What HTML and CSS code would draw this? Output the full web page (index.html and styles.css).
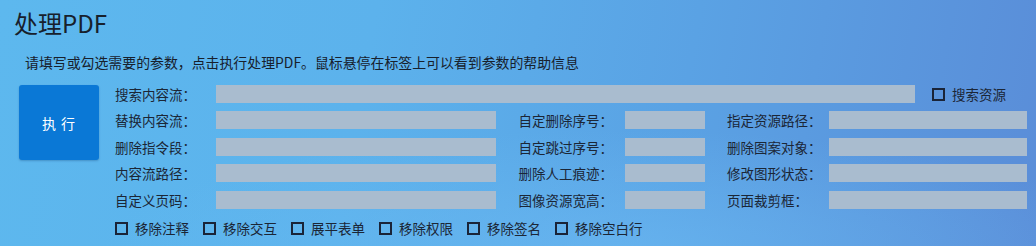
FILE: index.html
```html
<!DOCTYPE html>
<html lang="zh-CN">
<head>
    <meta charset="UTF-8">
    <title>处理PDF</title>
    <link rel="stylesheet" href="styles.css">
</head>
<body>
    <div class="page">
        <h1 class="title">处理PDF</h1>
        <p class="hint">请填写或勾选需要的参数，点击执行处理PDF。鼠标悬停在标签上可以看到参数的帮助信息</p>
        <div class="main">
            <button class="run">执 行</button>
            <div class="form">
                <div class="row-first">
                    <label class="lbl">搜索内容流：</label>
                    <input class="field wide" type="text">
                    <label class="check"><span class="box"></span>搜索资源</label>
                </div>
                <div class="grid">
                    <label class="lbl">替换内容流：</label>
                    <input class="field" type="text">
                    <label class="lbl mid">自定删除序号：</label>
                    <input class="field" type="text">
                    <label class="lbl right">指定资源路径：</label>
                    <input class="field" type="text">

                    <label class="lbl">删除指令段：</label>
                    <input class="field" type="text">
                    <label class="lbl mid">自定跳过序号：</label>
                    <input class="field" type="text">
                    <label class="lbl right">删除图案对象：</label>
                    <input class="field" type="text">

                    <label class="lbl">内容流路径：</label>
                    <input class="field" type="text">
                    <label class="lbl mid">删除人工痕迹：</label>
                    <input class="field" type="text">
                    <label class="lbl right">修改图形状态：</label>
                    <input class="field" type="text">

                    <label class="lbl">自定义页码：</label>
                    <input class="field" type="text">
                    <label class="lbl mid">图像资源宽高：</label>
                    <input class="field" type="text">
                    <label class="lbl right">页面裁剪框：</label>
                    <input class="field" type="text">
                </div>
                <div class="checks">
                    <label class="check"><span class="box"></span>移除注释</label>
                    <label class="check"><span class="box"></span>移除交互</label>
                    <label class="check"><span class="box"></span>展平表单</label>
                    <label class="check"><span class="box"></span>移除权限</label>
                    <label class="check"><span class="box"></span>移除签名</label>
                    <label class="check"><span class="box"></span>移除空白行</label>
                </div>
            </div>
        </div>
    </div>
</body>
</html>
```
FILE: styles.css
```css
html, body {
    margin: 0;
    padding: 0;
    height: 100%;
}
body {
    font-family: "Noto Sans CJK SC", "Noto Sans", sans-serif;
    color: #1b2636;
    background:
        radial-gradient(ellipse 520px 120px at 620px 250px, rgba(110, 190, 245, 0.55), rgba(110, 190, 245, 0) 100%),
        linear-gradient(100deg, #5db8ee 0%, #5cb2ec 35%, #5aa2e4 65%, #5a8dd8 100%);
    overflow: hidden;
}
.page {
    padding: 8px 0 0 0;
}
.title {
    margin: 0 0 0 14px;
    font-size: 24px;
    font-weight: normal;
    line-height: 30px;
    color: #17202c;
}
.hint {
    margin: 15px 0 0 25px;
    font-size: 13.9px;
    line-height: 18px;
    color: #17202c;
}
.main {
    display: flex;
    margin-top: 14px;
    padding-left: 19px;
}
.run {
    width: 80px;
    height: 75px;
    border: none;
    border-radius: 3px;
    background-color: #0a78d6;
    color: #fff;
    font-family: inherit;
    font-size: 14px;
    letter-spacing: 1px;
    box-shadow: 0 1px 2px rgba(0, 40, 90, 0.25);
}
.form {
    margin-left: 16px;
}
.lbl {
    font-size: 13.5px;
    line-height: 18px;
    white-space: nowrap;
}
.field {
    height: 18px;
    margin: 0;
    padding: 0;
    border: none;
    background-color: #a9bccf;
    box-sizing: border-box;
}
.row-first {
    display: flex;
    align-items: center;
    height: 18px;
}
.row-first .lbl {
    width: 101px;
}
.wide {
    width: 699px;
}
.row-first .check {
    margin-left: 17px;
}
.grid {
    display: grid;
    grid-template-columns: 101px 280px 129px 80px 124px 198px;
    grid-auto-rows: 18px;
    row-gap: 8.7px;
    margin-top: 8px;
    align-items: center;
}
.grid .field {
    width: 100%;
}
.mid {
    text-align: right;
    padding-right: 12px;
}
.right {
    padding-left: 22px;
}
.checks {
    display: flex;
    gap: 14px;
    margin-top: 10px;
}
.check {
    display: flex;
    align-items: center;
    font-size: 13.5px;
    line-height: 18px;
}
.box {
    width: 9px;
    height: 9px;
    border: 2px solid #1a2438;
    margin-right: 7px;
}
```
